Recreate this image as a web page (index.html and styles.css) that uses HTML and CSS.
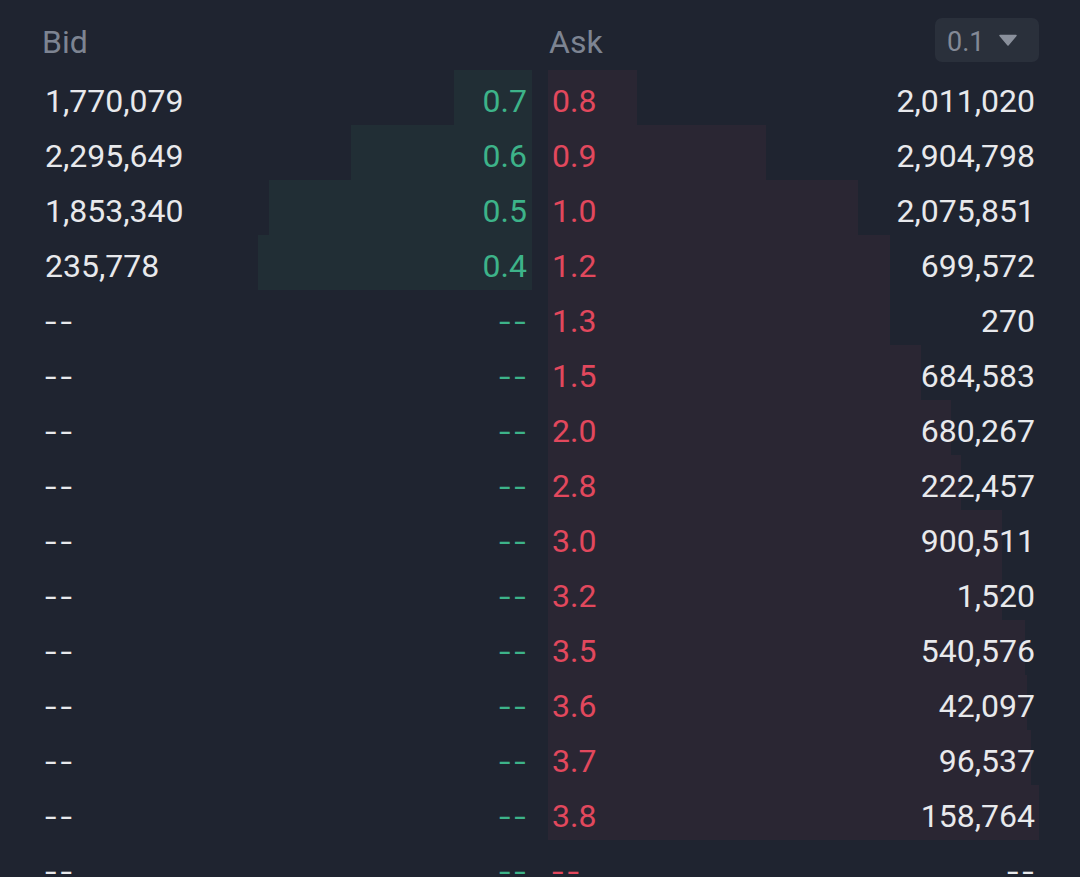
FILE: index.html
```html
<!DOCTYPE html>
<html>
<head>
<meta charset="utf-8">
<link rel="stylesheet" href="styles.css">
</head>
<body>
<div class="book">
  <div class="head">
    <div class="side-title">Bid</div>
    <div class="side-title ask-head">
      <span>Ask</span>
      <button class="step"><span class="step-val">0.1</span><svg class="caret" viewBox="0 0 18 12" width="18" height="12"><path d="M1 1.5h16L9 11z" fill="currentColor" stroke="currentColor" stroke-width="1.5" stroke-linejoin="round"/></svg></button>
    </div>
  </div>
  <div class="sides">
    <div class="side bid">
      <div class="row"><div class="bar" style="width:78px"></div><span class="qty">1,770,079</span><span class="price">0.7</span></div>
      <div class="row"><div class="bar" style="width:181px"></div><span class="qty">2,295,649</span><span class="price">0.6</span></div>
      <div class="row"><div class="bar" style="width:263px"></div><span class="qty">1,853,340</span><span class="price">0.5</span></div>
      <div class="row"><div class="bar" style="width:274px"></div><span class="qty">235,778</span><span class="price">0.4</span></div>
      <div class="row"><span class="qty dash">--</span><span class="price dash">--</span></div>
      <div class="row"><span class="qty dash">--</span><span class="price dash">--</span></div>
      <div class="row"><span class="qty dash">--</span><span class="price dash">--</span></div>
      <div class="row"><span class="qty dash">--</span><span class="price dash">--</span></div>
      <div class="row"><span class="qty dash">--</span><span class="price dash">--</span></div>
      <div class="row"><span class="qty dash">--</span><span class="price dash">--</span></div>
      <div class="row"><span class="qty dash">--</span><span class="price dash">--</span></div>
      <div class="row"><span class="qty dash">--</span><span class="price dash">--</span></div>
      <div class="row"><span class="qty dash">--</span><span class="price dash">--</span></div>
      <div class="row"><span class="qty dash">--</span><span class="price dash">--</span></div>
      <div class="row"><span class="qty dash">--</span><span class="price dash">--</span></div>
    </div>
    <div class="side ask">
      <div class="row"><div class="bar" style="width:89px"></div><span class="price">0.8</span><span class="qty">2,011,020</span></div>
      <div class="row"><div class="bar" style="width:218px"></div><span class="price">0.9</span><span class="qty">2,904,798</span></div>
      <div class="row"><div class="bar" style="width:310px"></div><span class="price">1.0</span><span class="qty">2,075,851</span></div>
      <div class="row"><div class="bar" style="width:342px"></div><span class="price">1.2</span><span class="qty">699,572</span></div>
      <div class="row"><div class="bar" style="width:342px"></div><span class="price">1.3</span><span class="qty">270</span></div>
      <div class="row"><div class="bar" style="width:373px"></div><span class="price">1.5</span><span class="qty">684,583</span></div>
      <div class="row"><div class="bar" style="width:403px"></div><span class="price">2.0</span><span class="qty">680,267</span></div>
      <div class="row"><div class="bar" style="width:413px"></div><span class="price">2.8</span><span class="qty">222,457</span></div>
      <div class="row"><div class="bar" style="width:454px"></div><span class="price">3.0</span><span class="qty">900,511</span></div>
      <div class="row"><div class="bar" style="width:454px"></div><span class="price">3.2</span><span class="qty">1,520</span></div>
      <div class="row"><div class="bar" style="width:477px"></div><span class="price">3.5</span><span class="qty">540,576</span></div>
      <div class="row"><div class="bar" style="width:479px"></div><span class="price">3.6</span><span class="qty">42,097</span></div>
      <div class="row"><div class="bar" style="width:483px"></div><span class="price">3.7</span><span class="qty">96,537</span></div>
      <div class="row"><div class="bar" style="width:491px"></div><span class="price">3.8</span><span class="qty">158,764</span></div>
      <div class="row"><span class="price dash">--</span><span class="qty dash">--</span></div>
    </div>
  </div>
</div>
</body>
</html>
```
FILE: styles.css
```css
html, body {
  margin: 0;
  padding: 0;
  background: #1f2430;
  height: 100%;
  overflow: hidden;
}

.book {
  font-family: Roboto, "Liberation Sans", sans-serif;
  font-size: 32px;
  color: #e8e9ec;
  padding: 0 40px;
}

.head {
  display: grid;
  grid-template-columns: 1fr 1fr;
  column-gap: 16px;
  height: 70px;
  padding-top: 14px;
  box-sizing: border-box;
  align-items: center;
}

.side-title {
  color: #7d8492;
  padding-left: 2px;
  line-height: 1;
}

.ask-head {
  display: flex;
  align-items: center;
  justify-content: space-between;
  padding-left: 1px;
}

.step {
  font-family: inherit;
  font-size: 27px;
  color: #838996;
  background: #2a303b;
  border: none;
  border-radius: 7px;
  height: 44px;
  width: 104px;
  padding: 0 0 0 12px;
  display: flex;
  align-items: center;
  gap: 15px;
  margin-top: -4px;
  margin-right: 1px;
}

.step-val {
  padding-top: 4px;
}

.caret {
  color: #8a909c;
  margin-top: -1px;
}

.sides {
  display: grid;
  grid-template-columns: 1fr 1fr;
  column-gap: 16px;
}

.row {
  position: relative;
  height: 55px;
  display: flex;
  align-items: center;
  justify-content: space-between;
  padding: 6px 5px 0 5px;
  box-sizing: border-box;
}

.row span {
  position: relative;
}

.dash {
  letter-spacing: 3px;
  transform: scaleX(1.3);
  transform-origin: left center;
}

.bid .price.dash,
.ask .qty.dash {
  margin-right: -3px;
  transform-origin: right center;
}

.bar {
  position: absolute;
  top: 0;
  bottom: 0;
}

.bid .bar {
  right: 0;
  background: #212e35;
}

.ask .bar {
  left: 0;
  background: #2a2633;
}

.ask .row {
  padding-left: 4px;
}

.bid .price {
  color: #3db389;
}

.ask .price {
  color: #e2485d;
}
```
